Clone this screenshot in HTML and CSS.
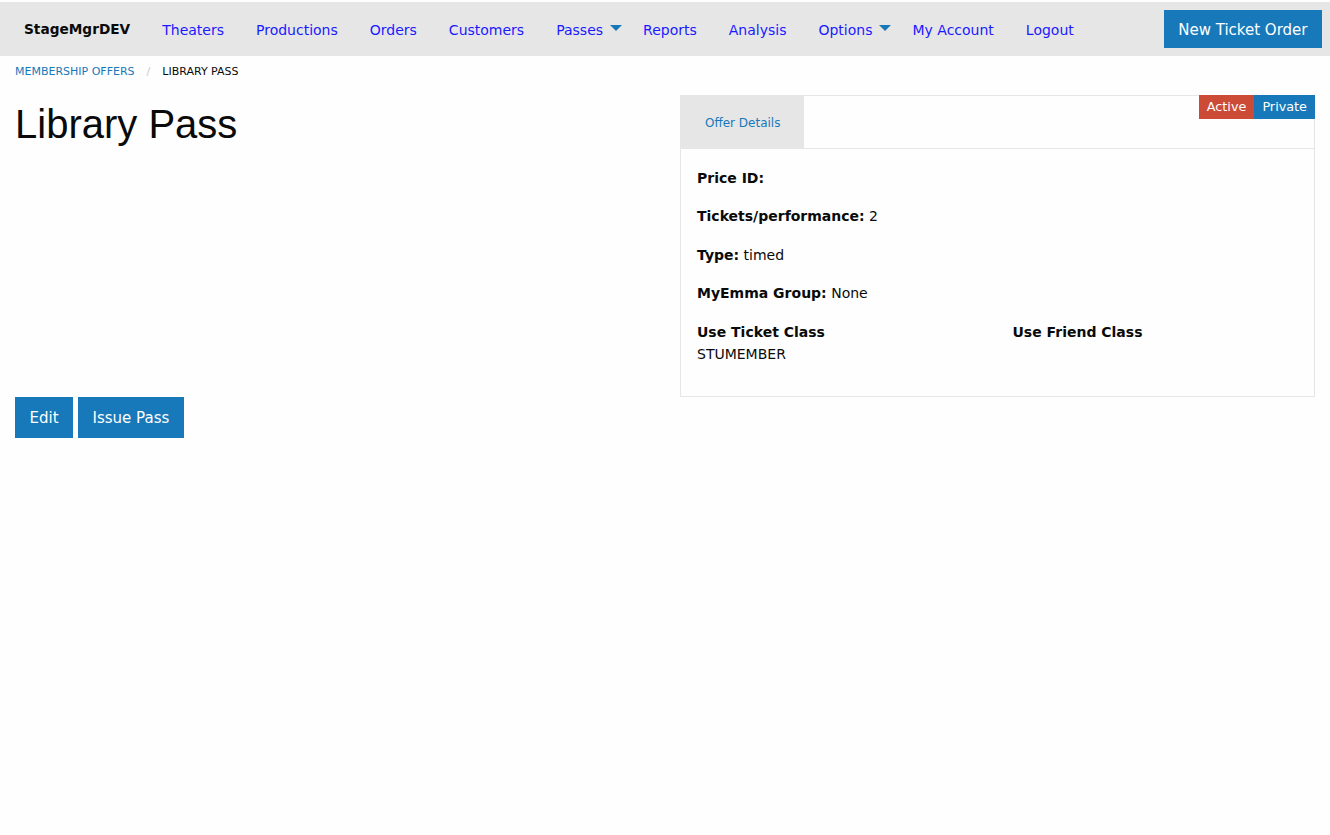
FILE: index.html
```html
<!DOCTYPE html>
<html lang="en">
<head>
    <meta charset="UTF-8">
    <meta name="viewport" content="width=device-width, initial-scale=1.0">
    <title>Library Pass - StageMgrDEV</title>
    <link rel="stylesheet" href="styles.css">
</head>
<body>
    <div class="top-bar">
        <ul class="menu">
            <li class="menu-text">StageMgrDEV</li>
            <li><a href="#">Theaters</a></li>
            <li><a href="#">Productions</a></li>
            <li><a href="#">Orders</a></li>
            <li><a href="#">Customers</a></li>
            <li class="has-dropdown"><a href="#">Passes</a></li>
            <li><a href="#">Reports</a></li>
            <li><a href="#">Analysis</a></li>
            <li class="has-dropdown"><a href="#">Options</a></li>
            <li><a href="#">My Account</a></li>
            <li><a href="#">Logout</a></li>
        </ul>
        <a href="#" class="button button-nav">New Ticket Order</a>
    </div>

    <nav class="breadcrumbs-wrap">
        <ul class="breadcrumbs">
            <li><a href="#">Membership Offers</a></li>
            <li class="current">Library Pass</li>
        </ul>
    </nav>

    <div class="grid">
        <div class="cell">
            <h1>Library Pass</h1>
        </div>
        <div class="cell">
            <div class="offer-card">
                <div class="labels">
                    <span class="label label-alert">Active</span><span class="label label-primary">Private</span>
                </div>
                <ul class="tabs">
                    <li class="tabs-title is-active"><a href="#">Offer Details</a></li>
                </ul>
                <div class="tabs-content">
                    <p><strong>Price ID:</strong></p>
                    <p><strong>Tickets/performance:</strong> 2</p>
                    <p><strong>Type:</strong> timed</p>
                    <p><strong>MyEmma Group:</strong> None</p>
                    <div class="class-grid">
                        <div>
                            <strong class="field-title">Use Ticket Class</strong>
                            <p>STUMEMBER</p>
                        </div>
                        <div>
                            <strong class="field-title">Use Friend Class</strong>
                        </div>
                    </div>
                </div>
            </div>
        </div>
    </div>

    <div class="actions">
        <a href="#" class="button">Edit</a>
        <a href="#" class="button">Issue Pass</a>
    </div>
</body>
</html>
```

FILE: styles.css
```css
* {
    margin: 0;
    padding: 0;
    box-sizing: border-box;
}

body {
    font-family: 'DejaVu Sans', Verdana, sans-serif;
    color: #0a0a0a;
    background: #fefefe;
    padding-top: 2px;
}

ul {
    list-style: none;
}

a {
    text-decoration: none;
}

/* top bar */
.top-bar {
    display: flex;
    align-items: center;
    justify-content: space-between;
    background: #e6e6e6;
    padding: 8px;
}

.menu {
    display: flex;
    align-items: center;
    font-size: 14px;
}

.menu-text {
    font-weight: bold;
    font-size: 13.7px;
    padding: 8px 16px;
}

.menu a {
    display: block;
    color: #1a1aff;
    padding: 12px 16px 10px;
    line-height: 1;
}

.has-dropdown a {
    position: relative;
    padding-right: 24px;
}

.has-dropdown a::after {
    content: '';
    position: absolute;
    right: 5px;
    top: 50%;
    margin-top: -4px;
    border: 6px solid transparent;
    border-top-color: #1779ba;
    border-bottom-width: 0;
}

.button {
    display: inline-block;
    background: #1779ba;
    color: #fefefe;
    font-size: 15px;
    line-height: 15px;
    padding: 14px 14.5px 12px;
}

.button-nav {
    padding: 12.5px 14.5px 10.5px;
}

/* breadcrumbs */
.breadcrumbs-wrap {
    padding: 8px 15px 0;
    margin-bottom: 15px;
}

.breadcrumbs {
    display: flex;
    font-size: 11px;
    line-height: 16px;
    text-transform: uppercase;
}

.breadcrumbs a {
    color: #1779ba;
}

.breadcrumbs li:not(:last-child)::after {
    content: '/';
    color: #cacaca;
    margin: 0 12px;
}

/* layout */
.grid {
    display: grid;
    grid-template-columns: 1fr 1fr;
}

.cell {
    padding: 0 15px;
}

h1 {
    font-family: 'Liberation Sans', Arial, sans-serif;
    font-weight: normal;
    font-size: 40px;
    line-height: 58px;
}

/* offer card */
.offer-card {
    position: relative;
}

.labels {
    position: absolute;
    top: 0;
    right: 0;
    display: flex;
}

.label {
    font-size: 12.8px;
    line-height: 1;
    padding: 6px 8px 5px;
    color: #fefefe;
}

.label-alert {
    background: #cc4b37;
}

.label-primary {
    background: #1779ba;
}

.tabs {
    display: flex;
    border: 1px solid #e6e6e6;
    background: #fefefe;
}

.tabs-title a {
    display: block;
    padding: 21px 24px 19px;
    font-size: 12px;
    line-height: 1;
    color: #1779ba;
}

.tabs-title.is-active a {
    background: #e6e6e6;
}

.tabs-content {
    border: 1px solid #e6e6e6;
    border-top: 0;
    padding: 18px 16px 15px;
    font-size: 14px;
    line-height: 22.4px;
}

.tabs-content p {
    margin-bottom: 16px;
}

.class-grid {
    display: grid;
    grid-template-columns: 1fr 1fr;
    gap: 30px;
}

.field-title {
    display: block;
}

/* actions */
.actions {
    display: flex;
    gap: 5px;
    padding: 0 15px;
}
```
